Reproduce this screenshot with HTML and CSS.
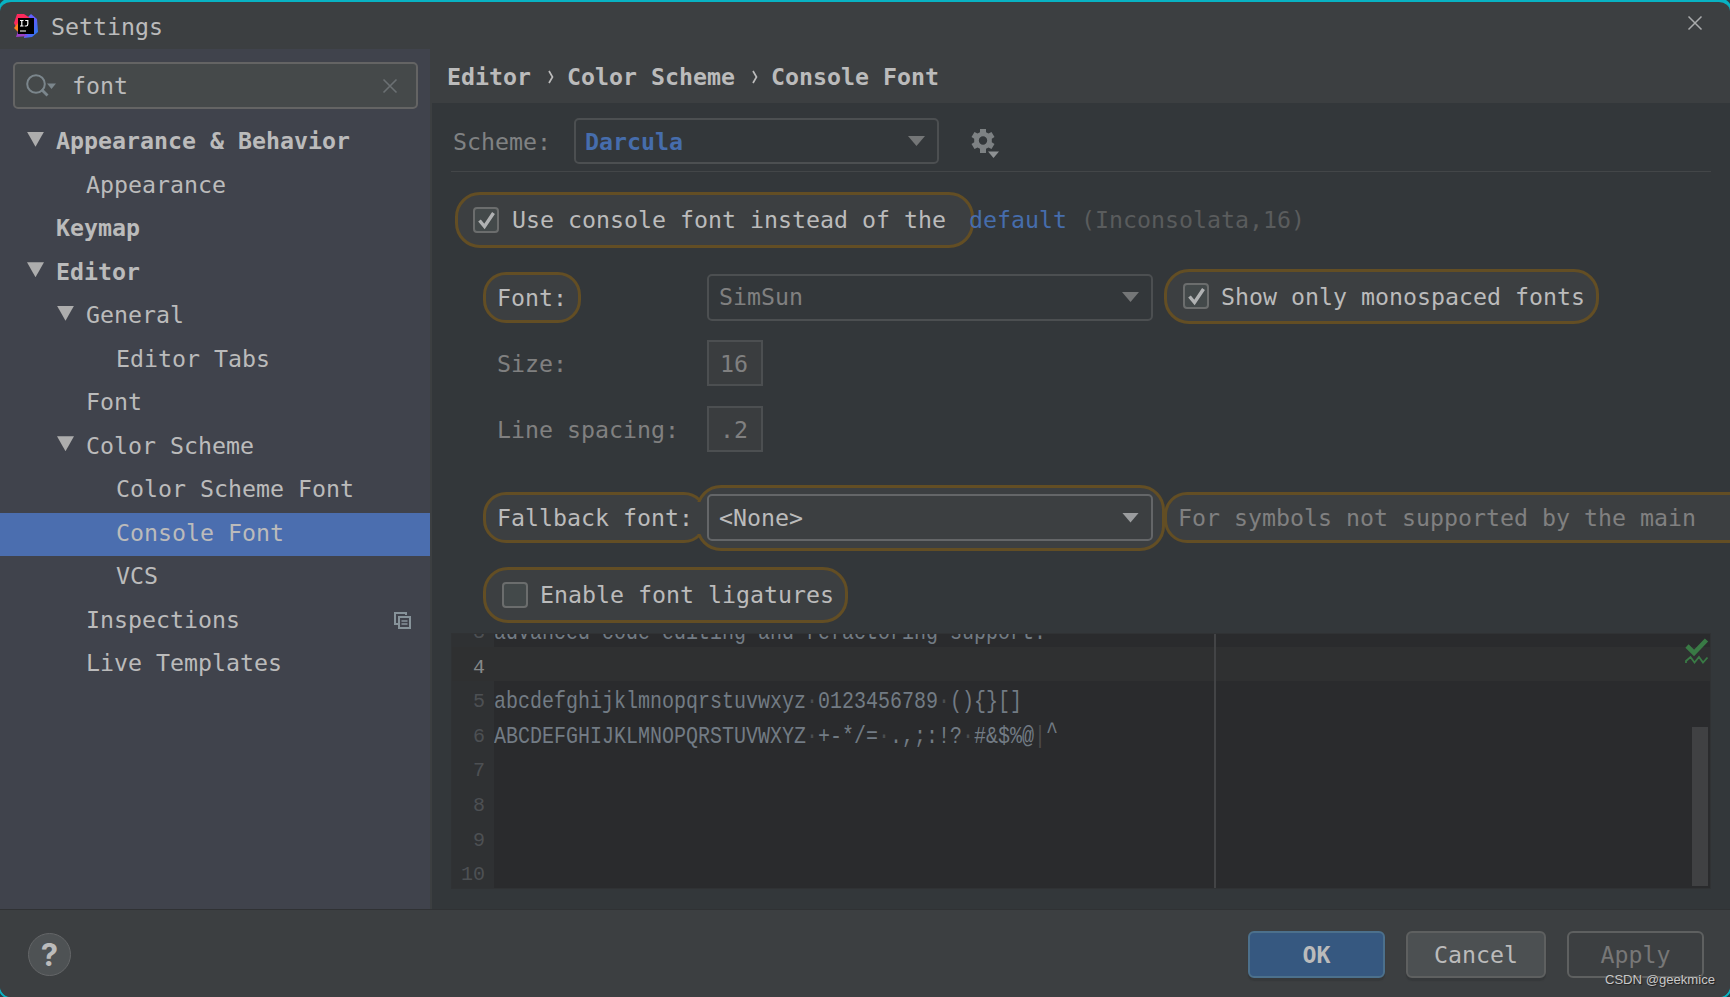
FILE: index.html
```html
<!DOCTYPE html>
<html lang="en">
<head>
<meta charset="utf-8">
<title>Settings</title>
<link rel="stylesheet" href="styles.css">
</head>
<body>
<div class="window">
  <header class="titlebar">
    <svg class="logo" width="24" height="24" viewBox="0 0 24 24">
      <defs>
        <linearGradient id="lg" x1="0" y1="0" x2="1" y2="1"><stop offset="0" stop-color="#3f7af0"/><stop offset=".4" stop-color="#6b57ff"/><stop offset="1" stop-color="#1f7fe8"/></linearGradient>
      </defs>
      <path d="M13 4 17 0l6 5 1 13-6 5-8 1z" fill="url(#lg)"/>
      <path d="M3 0h7l6 4-4 9H2L0 9z" fill="#fb2a5c"/>
      <path d="M0 14 4 9v9z" fill="#fc801d"/>
      <path d="M4 17 2 23l12-1z" fill="#9a3fc4"/>
      <rect x="4" y="4" width="16" height="16" fill="#000"/>
      <path d="M6 6.500h3.500M7.800 6.500v5M6 12h3.500M11.200 6.500h2.600V10q0 2-1.600 2h-1.500M6 17h6" stroke="#fff" stroke-width="1.200" fill="none"/>
    </svg>
    <span class="title">Settings</span>
    <svg class="close" width="16" height="16" viewBox="0 0 16 16"><path d="M1.500 1.500l13 13M14.500 1.500l-13 13" stroke="#a9abac" stroke-width="1.500"/></svg>
  </header>

  <div class="main">
    <aside class="sidebar">
      <div class="search">
        <svg width="31" height="24" viewBox="0 0 31 24"><circle cx="10" cy="10" r="8.800" fill="none" stroke="#7b868c" stroke-width="2"/><path d="M15.500 15.500l6 6" stroke="#7b868c" stroke-width="2.800"/><path d="M21 9.500h9l-4.500 5.500z" fill="#7b868c"/></svg>
        <span class="query">font</span>
        <svg class="clear" width="16" height="16" viewBox="0 0 16 16"><path d="M1.500 1.500l13 13M14.500 1.500l-13 13" stroke="#6b7073" stroke-width="1.600"/></svg>
      </div>
      <ul class="tree">
        <li class="node l0 bold"><i class="arrow"></i>Appearance &amp; Behavior</li>
        <li class="node l1"><i class="noarrow"></i>Appearance</li>
        <li class="node l0 bold"><i class="noarrow"></i>Keymap</li>
        <li class="node l0 bold"><i class="arrow"></i>Editor</li>
        <li class="node l1"><i class="arrow"></i>General</li>
        <li class="node l2"><i class="noarrow"></i>Editor Tabs</li>
        <li class="node l1"><i class="noarrow"></i>Font</li>
        <li class="node l1"><i class="arrow"></i>Color Scheme</li>
        <li class="node l2"><i class="noarrow"></i>Color Scheme Font</li>
        <li class="node l2 selected"><i class="noarrow"></i>Console Font</li>
        <li class="node l2"><i class="noarrow"></i>VCS</li>
        <li class="node l1"><i class="noarrow"></i>Inspections
          <svg class="copy" width="17" height="17" viewBox="0 0 17 17" fill="none" stroke="#87939a"><path d="M4 12H1V1h11v2" stroke-width="2"/><path d="M5 5h11v11H5z" stroke-width="2"/><path d="M7.500 9h6M7.500 12h6" stroke-width="1.500"/></svg>
        </li>
        <li class="node l1"><i class="noarrow"></i>Live Templates</li>
      </ul>
    </aside>

    <section class="page">
      <nav class="crumbs"><span>Editor</span><svg class="sep" width="6" height="14" viewBox="0 0 6 14"><path d="M1 1l3.500 6L1 13" fill="none" stroke="#bbb" stroke-width="1.700"/></svg><span>Color Scheme</span><svg class="sep" width="6" height="14" viewBox="0 0 6 14"><path d="M1 1l3.500 6L1 13" fill="none" stroke="#bbb" stroke-width="1.700"/></svg><span>Console Font</span></nav>

      <div class="content">
        <div class="scheme">
          <span class="scheme-label">Scheme:</span>
          <div class="select scheme-select"><b>Darcula</b><i class="caret"></i></div>
          <svg class="gear" width="28" height="30" viewBox="0 0 28 30">
            <path fill="#7d8183" fill-rule="evenodd" d="M9 1h6v3.200l2.500 1.400 3-1.600 3 5-2.700 1.700v3.600l2.700 1.700-3 5-3-1.600L15 20.800V25H9v-4.200l-2.500-1.400-3 1.600-3-5 2.700-1.700v-3.600L.5 9l3-5 3 1.600L9 4.200zM12 8.300a4.200 4.200 0 1 0 0 8.400 4.200 4.200 0 0 0 0-8.400z"/>
            <path fill="#8e9193" d="M17 23.500h11L22.500 30z"/>
          </svg>
        </div>
        <div class="rule"></div>

        <div class="row row-use">
          <div class="pill pill-use"><span class="check"><svg width="27" height="27" viewBox="0 0 27 27"><path d="M6.500 13.500l5 6L20.500 6" fill="none" stroke="#b0b2b3" stroke-width="3.400"/></svg></span>Use console font instead of the</div>
          <span class="link">default</span><span class="faint">(Inconsolata,16)</span>
        </div>

        <div class="row row-font">
          <div class="label"><div class="pill pill-label">Font:</div></div>
          <div class="select dim font-select">SimSun<i class="caret"></i></div>
          <div class="pill pill-show"><span class="check"><svg width="27" height="27" viewBox="0 0 27 27"><path d="M6.500 13.500l5 6L20.500 6" fill="none" stroke="#b0b2b3" stroke-width="3.400"/></svg></span>Show only monospaced fonts</div>
        </div>

        <div class="row row-size"><div class="label plain">Size:</div><div class="num">16</div></div>
        <div class="row row-spacing"><div class="label plain">Line spacing:</div><div class="num">.2</div></div>

        <div class="row row-fallback">
          <div class="pill pill-label pill-fallback">Fallback font:</div>
          <div class="pill pill-select"><div class="select lit">&lt;None&gt;<i class="caret"></i></div></div>
          <div class="pill pill-note">For symbols not supported by the main</div>
        </div>

        <div class="row row-liga">
          <div class="pill pill-liga"><span class="check"></span>Enable font ligatures</div>
        </div>

        <div class="editor">
          <div class="line"><span class="no">3</span><code>advanced code editing and refactoring support.</code></div>
          <div class="line current"><span class="no">4</span><code></code></div>
          <div class="line"><span class="no">5</span><code>abcdefghijklmnopqrstuvwxyz<s>·</s>0123456789<s>·</s>(){}[]</code></div>
          <div class="line"><span class="no">6</span><code>ABCDEFGHIJKLMNOPQRSTUVWXYZ<s>·</s>+-*/=<s>·</s>.,;:!?<s>·</s>#&amp;$%@<em>|</em><span class="hat">^</span></code></div>
          <div class="line"><span class="no">7</span></div>
          <div class="line"><span class="no">8</span></div>
          <div class="line"><span class="no">9</span></div>
          <div class="line"><span class="no">10</span></div>
          <div class="margin"></div>
          <svg class="ok-mark" width="24" height="26" viewBox="0 0 24 26" fill="none" stroke="#397a45"><path d="M2 8l7 7L21.500 2" stroke-width="4.600"/><path d="M1 25v-2l4.500-4 4 5.500 4.500-5.500 4 5.500 4.500-5" stroke-width="1.800"/></svg>
          <div class="thumb"></div>
        </div>
      </div>
    </section>
  </div>

  <footer class="footer">
    <div class="help">?</div>
    <div class="btn ok">OK</div>
    <div class="btn cancel">Cancel</div>
    <div class="btn apply">Apply</div>
  </footer>
  <div class="watermark">CSDN @geekmice</div>
</div>
</body>
</html>
```
FILE: styles.css
```css
* { box-sizing: border-box; }
html { background: #08b3c3; }
body {
  margin: 0;
  width: 1730px;
  height: 997px;
  overflow: hidden;
  background: #2b4045;
  font: 23.25px/28px "DejaVu Sans Mono", monospace;
  color: #bbbbbb;
  white-space: nowrap;
}
.window {
  position: relative;
  width: 1730px;
  height: 997px;
  display: flex;
  flex-direction: column;
  overflow: hidden;
  border-top: 2px solid #08b3c3;
  border-radius: 11px;
  background: #3c3f41;
  box-shadow: 0 0 0 2px #08b3c3;
}
.titlebar { height: 47px; display: flex; padding-left: 14px; }
.logo { margin-top: 12px; }
.title { margin: 11px 0 0 13px; }
.close { margin: 13px 27px 0 auto; }

.main { display: flex; height: 860px; }
.sidebar {
  width: 432px;
  background: #40434c;
  border-right: 2px solid #3c3f41;
  padding-top: 13px;
}
.search {
  display: flex;
  align-items: center;
  width: 405px;
  height: 47px;
  margin-left: 13px;
  padding: 0 18px 0 11px;
  border: 2px solid #646464;
  border-radius: 5px;
  background: #45494a;
}
.query { margin-left: 15px; padding-top: 1px; }
.clear { margin-left: auto; }
.tree { list-style: none; margin: 12px 0 0; padding: 0; }
.node {
  display: flex;
  align-items: center;
  height: 43.500px;
  padding-bottom: 3px;
}
.l0 { padding-left: 27px; }
.l1 { padding-left: 57px; }
.l2 { padding-left: 87px; }
.bold { font-weight: bold; }
.selected { background: #4b6eaf; }
.arrow, .noarrow { width: 17px; height: 15px; margin-right: 12px; }
.arrow { background: #adadad; clip-path: polygon(0 0, 100% 0, 50% 100%); margin-bottom: 4px; }
.copy { margin: 1px 19px 0 auto; }

.page { flex: 1; min-width: 0; }
.crumbs {
  display: flex;
  align-items: center;
  height: 54px;
  padding: 2px 0 0 15px;
  font-weight: bold;
}
.crumbs .sep { margin: 0 13px 0 17px; }
.content {
  height: 806px;
  padding: 15px 0 0 19px;
  background: #33373a;
  overflow: hidden;
}
.scheme { display: flex; align-items: center; height: 46px; padding-left: 2px; }
.scheme-label { color: #808283; padding-top: 1px; }
.dim { color: #808080; }
.select {
  display: flex;
  align-items: center;
  justify-content: space-between;
  width: 446px;
  height: 47px;
  padding: 0 12px 0 10px;
  border: 2px solid #4c4f51;
  border-radius: 5px;
}
.scheme-select { width: 365px; height: 46px; margin-left: 23px; color: #466dac; padding-left: 9px; padding-right: 12px; }
.scheme-select b { padding-top: 1px; }
.caret { width: 17px; height: 10px; background: #747677; clip-path: polygon(0 0, 100% 0, 50% 100%); }
.gear { margin: 3px 0 0 32px; }
.rule { width: 1260px; height: 1px; margin-top: 7px; background: #434648; }

.row { display: flex; align-items: center; }
.pill {
  display: flex;
  align-items: center;
  border: 3px solid #634e24;
  border-radius: 25px;
  background: #3c3f41;
}
.check {
  width: 26px;
  height: 26px;
  margin: 0 13px 1px 0;
  border: 2px solid #6b6d6d;
  border-radius: 4px;
  background: #43494a;
}
.check svg { display: block; margin: -2px; }
.row-use { height: 56px; margin-top: 20px; }
.pill-use { width: 519px; height: 56px; margin-left: 4px; padding-left: 15px; }
.link { margin-left: -5px; color: #466dac; position: relative; }
.faint { margin-left: 14px; color: #5a5c5d; }
.row-font { height: 55px; margin-top: 21px; padding-left: 32px; }
.label { width: 224px; }
.pill-label { width: 98px; height: 51px; padding-left: 11px; border-radius: 23px; }
.label .pill-label { margin-top: 2px; }
.font-select { margin-top: 1px; }
.plain { padding: 1px 0 0 14px; color: #808080; }
.pill-show { width: 435px; height: 55px; margin-left: 11px; padding-left: 16px; }
.pill-show .check { margin-right: 12px; }
.row-size { height: 46px; margin-top: 16px; padding-left: 32px; }
.row-spacing { height: 46px; margin-top: 20px; padding-left: 32px; }
.num {
  width: 56px;
  height: 46px;
  padding: 8px 0 0 11px;
  border: 2px solid #4c4f51;
  background: #3a3d3f;
  color: #808080;
}
.row-fallback { height: 66px; margin-top: 33px; padding-left: 32px; width: 1300px; }
.pill-fallback { width: 224px; flex: none; margin-bottom: 1px; }
.pill-select { position: relative; flex: none; width: 469px; height: 66px; margin-left: -11px; padding-left: 8px; border-radius: 25px; }
.pill-select::before {
  content: "";
  position: absolute;
  left: -4px;
  top: 14px;
  width: 10px;
  height: 32px;
  background: #3c3f41;
}
.lit { position: relative; border-color: #646668; margin-bottom: 1px; }
.lit .caret { background: #9a9c9e; }
.pill-note { flex: none; width: 620px; height: 51px; margin: 0 0 1px -1px; padding-left: 11px; border-radius: 23px; color: #808080; }
.row-liga { height: 56px; margin-top: 16px; padding-left: 32px; }
.pill-liga { width: 365px; height: 56px; padding-left: 16px; }
.pill-liga .check { margin-right: 12px; }

.editor {
  position: relative;
  width: 1260px;
  height: 256px;
  margin-top: 10px;
  overflow: hidden;
  background: linear-gradient(90deg, #2f3133 42px, #2a2b2d 42px);
  border: 1px solid #303234;
  font: 24px/34.600px "Liberation Mono", monospace;
  color: #727b84;
}
.line { display: flex; height: 34.600px; }
.line:first-child { margin-top: -22px; }
.current { background: #2f3031; }
.no {
  width: 41px;
  padding-right: 8px;
  text-align: right;
  font-size: 20px;
  color: #4d5053;
  padding-top: 4px;
}
.current .no { color: #85888a; }
.line code { font: inherit; padding-top: 4px; transform: scaleX(.8333); transform-origin: 0 0; margin-left: 1px; }
.line s { text-decoration: none; color: #4a4d50; }
.line em { font-style: normal; color: #4c4a48; }
.hat { position: relative; top: -5px; }
.margin { position: absolute; left: 762px; top: 0; width: 2px; height: 255px; background: #434446; }
.ok-mark { position: absolute; right: 1px; top: 4px; }
.thumb { position: absolute; right: 2px; top: 93px; width: 16px; height: 159px; background: #404143; }

.footer {
  display: flex;
  align-items: flex-start;
  height: 88px;
  padding: 21px 26px 0 28px;
  border-top: 1px solid #303234;
  background: #3c3f41;
}
.help {
  width: 43px;
  height: 43px;
  margin: 2px auto 0 0;
  border: 1.500px solid #646668;
  border-radius: 50%;
  background: #4e5254;
  font: bold 31px/41px "Inter", sans-serif;
  text-align: center;
}
.btn {
  width: 137px;
  height: 47px;
  border: 2px solid #5e6060;
  border-radius: 6px;
  text-align: center;
  line-height: 43px;
}
.ok { background: #365880; border-color: #4c708c; font-weight: bold; box-shadow: 0 3px 1px #36393b; }
.cancel { width: 140px; margin: 0 21px; background: #4c5052; box-shadow: 0 3px 1px #36393b; }
.apply { color: #777777; }
.watermark {
  position: absolute;
  right: 15px;
  bottom: 8px;
  font: 13.100px/18px "Liberation Sans", sans-serif;
  color: #c8c8c8;
  text-shadow: 1px 1px 1px #222;
}
```
